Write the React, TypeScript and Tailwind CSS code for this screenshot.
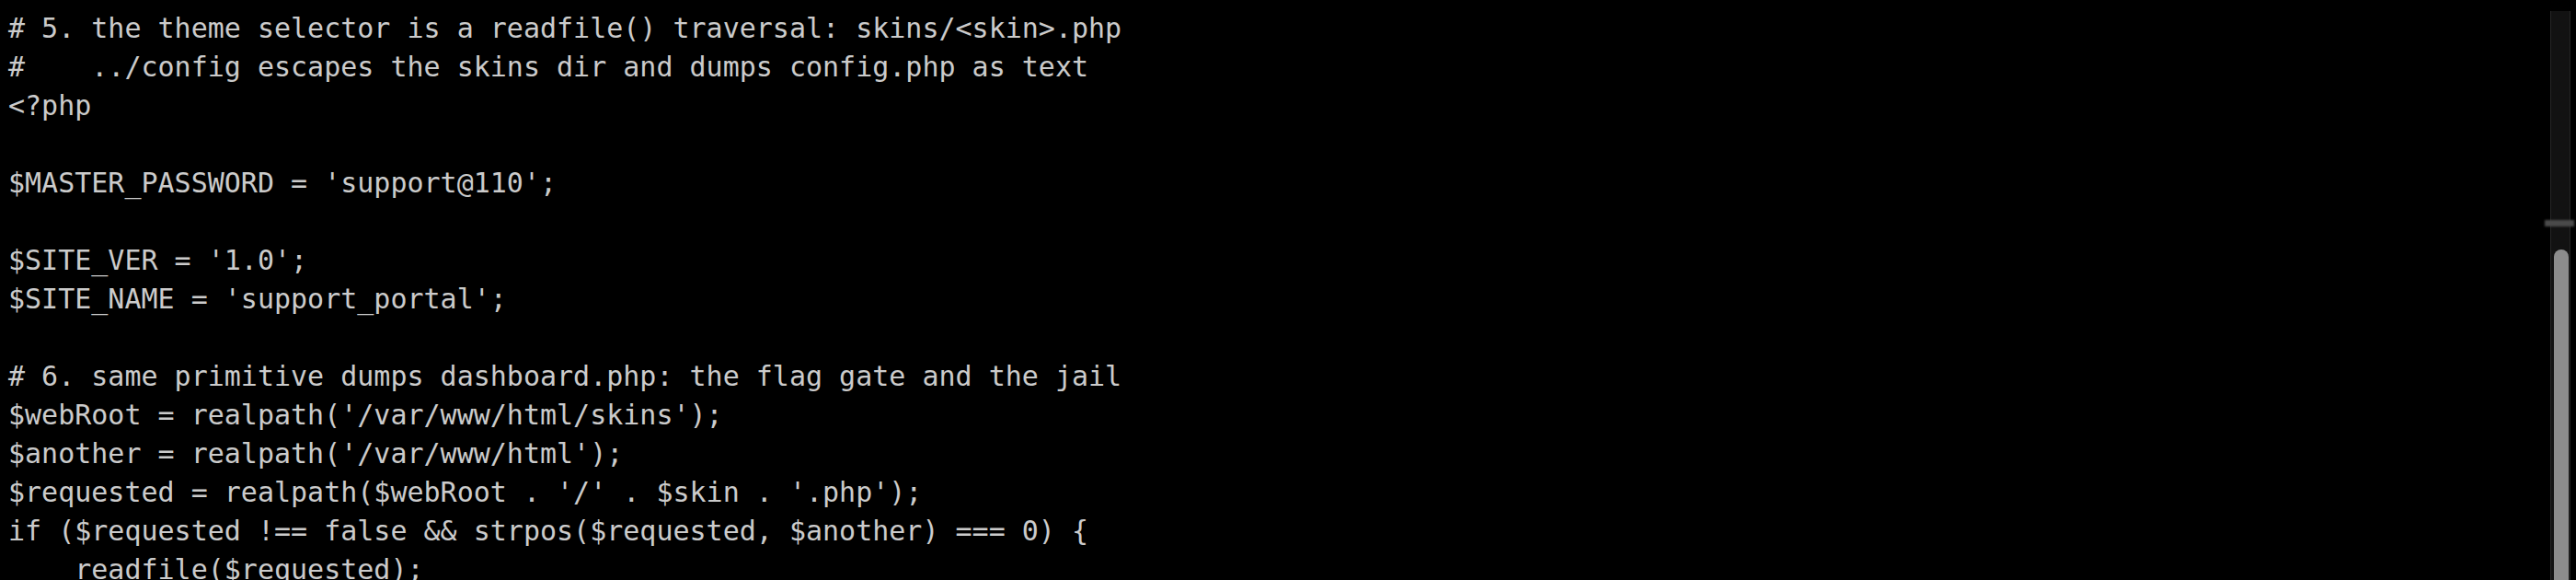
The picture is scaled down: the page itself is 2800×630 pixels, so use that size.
import React from "react";

const lines = [
  "# 5. the theme selector is a readfile() traversal: skins/<skin>.php",
  "#    ../config escapes the skins dir and dumps config.php as text",
  "<?php",
  "",
  "$MASTER_PASSWORD = 'support@110';",
  "",
  "$SITE_VER = '1.0';",
  "$SITE_NAME = 'support_portal';",
  "",
  "# 6. same primitive dumps dashboard.php: the flag gate and the jail",
  "$webRoot = realpath('/var/www/html/skins');",
  "$another = realpath('/var/www/html');",
  "$requested = realpath($webRoot . '/' . $skin . '.php');",
  "if ($requested !== false && strpos($requested, $another) === 0) {",
  "    readfile($requested);",
];

export default function App() {
  return (
    <div className="w-[2800px] h-[630px] bg-black flex overflow-hidden">
      <div
        className="flex-1 pl-[9px] pt-[10px] text-[30px] leading-[42px] text-[#cbcbcb] whitespace-pre"
        style={{ fontFamily: '"DejaVu Sans Mono", "Liberation Mono", monospace' }}
      >
        {lines.map((l, i) => (
          <div key={i} className="h-[42px]">
            {l}
          </div>
        ))}
      </div>
      <div className="relative w-[34px] h-full">
        <div className="absolute left-[6px] top-[12px] bottom-0 w-[22px] bg-[#121212] border-l border-r border-[#262626]">
          <div className="absolute left-[3px] top-[259px] bottom-0 w-[16px] rounded-t-full bg-[#8c8c8c]" />
        </div>
        <div className="absolute left-0 top-[239px] w-[32px] h-[7px] bg-[#4a4a4a] blur-[1px]" />
      </div>
    </div>
  );
}
